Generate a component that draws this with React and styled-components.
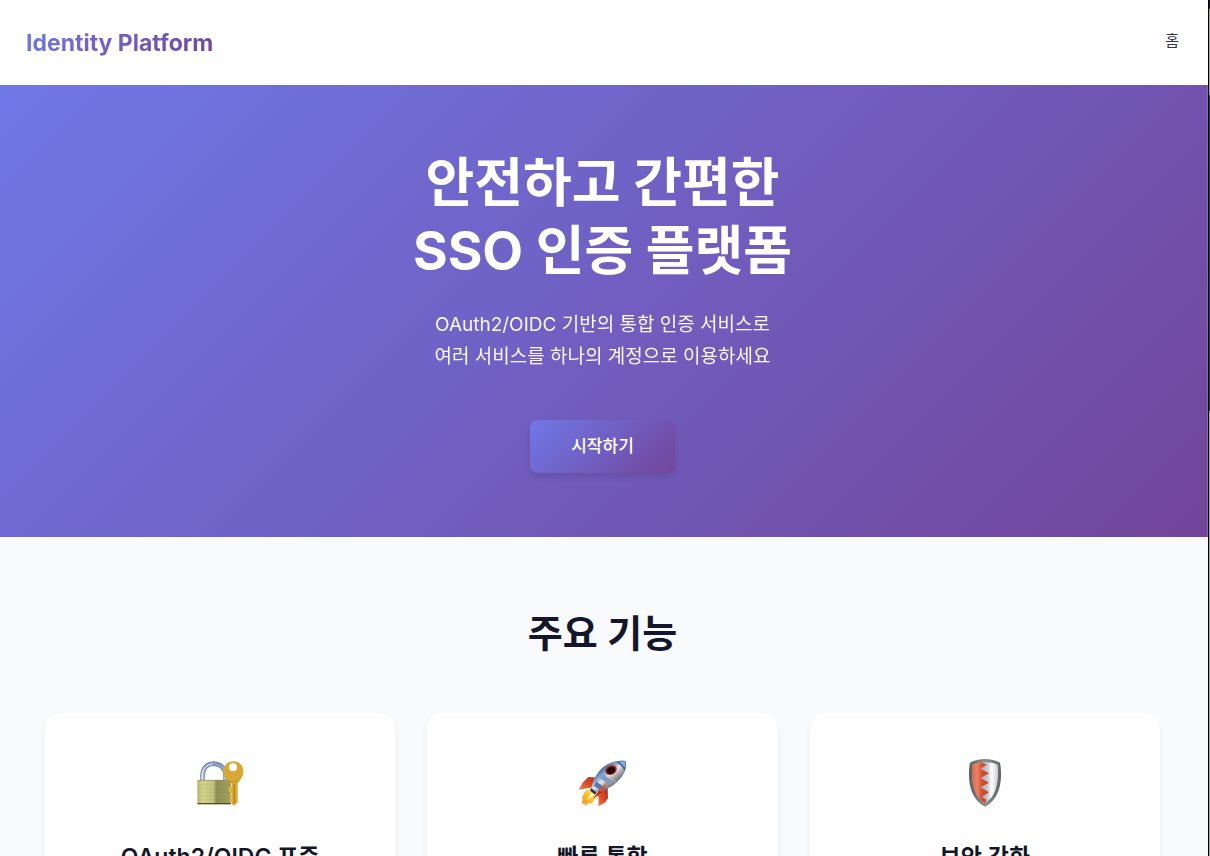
import React from "react";
import styled, { createGlobalStyle } from "styled-components";

const features = [
  { title: "OAuth2/OIDC 표준", icon: LockIcon },
  { title: "빠른 통합", icon: RocketIcon },
  { title: "보안 강화", icon: ShieldIcon },
];

function LockIcon() {
  return (
    <svg viewBox="48 42 144 144" width="48" height="48" aria-hidden="true">
      <defs>
        <linearGradient id="brass">
          <stop offset="0" stopColor="#b9b96c" />
          <stop offset="0.15" stopColor="#d3d38a" />
          <stop offset="0.48" stopColor="#c2c27c" />
          <stop offset="0.56" stopColor="#8f8f55" />
          <stop offset="1" stopColor="#a3a060" />
        </linearGradient>
        <linearGradient id="steel" x1="0" y1="0" x2="0" y2="1">
          <stop offset="0" stopColor="#8298c4" />
          <stop offset="1" stopColor="#b9c3d6" />
        </linearGradient>
      </defs>
      <path
        d="M68 108V92C68 70 81 56 101 56s36 14 36 36v16"
        fill="none"
        stroke="#6c7484"
        strokeWidth="14"
      />
      <path
        d="M68 108V92C68 70 81 56 101 56s36 14 36 36v16"
        fill="none"
        stroke="url(#steel)"
        strokeWidth="11"
      />
      <path
        d="M67 104V92c0-21 13-34 31-35"
        fill="none"
        stroke="#edf3ff"
        strokeWidth="3"
      />
      <rect x="52" y="105" width="101" height="73" rx="2" fill="url(#brass)" />
      <path
        d="M53 120h99M53 131h99M53 142h99M53 153h99M53 164h99"
        stroke="#747530"
        strokeOpacity="0.18"
        strokeWidth="2"
      />
      <path d="M53 106h99" stroke="#858657" strokeWidth="2" />
      <path d="M53 176h99" stroke="#544d20" strokeWidth="4" />
      <path
        d="M160 49c17 0 30 12 30 29 0 17-8 25-17 37v57l-12 11-6-8V114c-15-8-25-19-25-36 0-17 13-29 30-29zm-1 6a12 12 0 1 0 0 24 12 12 0 0 0 0-24z"
        fill="#d8a832"
        fillRule="evenodd"
      />
      <path
        d="M156 125h-8l-3 5v9l7 5h4zM156 149h-6l-4 4 5 5h5zM156 162h-6l-3 5 5 5h4z"
        fill="#dcb43c"
      />
      <path d="M163 117v59" stroke="#ae7a16" strokeWidth="3" />
      <path d="M138 105c12 7 28 7 39 0" fill="none" stroke="#b98420" strokeWidth="2" />
    </svg>
  );
}

function RocketIcon() {
  return (
    <svg viewBox="49 42 144 144" width="48" height="48" aria-hidden="true">
      <defs>
        <linearGradient id="hull" x1="0.2" y1="0.2" x2="0.75" y2="0.8">
          <stop offset="0.1" stopColor="#49668e" />
          <stop offset="0.3" stopColor="#7f9fce" />
          <stop offset="0.5" stopColor="#e6e6e4" />
          <stop offset="0.68" stopColor="#a4a6a9" />
          <stop offset="1" stopColor="#4d5055" />
        </linearGradient>
        <linearGradient id="fin" x1="1" y1="0" x2="0" y2="1">
          <stop offset="0" stopColor="#a72d16" />
          <stop offset="0.55" stopColor="#dc4a28" />
          <stop offset="1" stopColor="#ee8050" />
        </linearGradient>
        <linearGradient id="flame" x1="1" y1="0" x2="0" y2="1">
          <stop offset="0" stopColor="#fff3a0" />
          <stop offset="0.5" stopColor="#fac02f" />
          <stop offset="1" stopColor="#f18a20" />
        </linearGradient>
      </defs>
      <path
        d="M90 134c-12-4-21 3-25 15l-6 14 5-3-4 18 8-4 1 8 13-8 8 2 10-15 6-17z"
        fill="url(#flame)"
      />
      <path d="M89 143l-14 23 18-12 8-8z" fill="#fff5b4" />
      <path d="M113 98l-33-2-16 16-13 22 42-7z" fill="url(#fin)" />
      <path d="M138 127l1 33-8 12-21 12 1-24-3-9z" fill="url(#fin)" />
      <path d="M88 128l17 13-5 8-14-12z" fill="#263347" />
      <path
        d="M192 48c3 18-2 40-20 57-19 20-43 32-68 37l-15-13c5-26 17-47 36-63 19-15 43-21 67-18z"
        fill="url(#hull)"
      />
      <path d="M192 48c2 12 0 23-3 32-5-13-14-23-27-29 9-4 20-5 30-3z" fill="#496a9e" />
      <path d="M191 49c0 7-1 13-2 19-5-8-10-13-17-18z" fill="#8fb0dc" />
      <path d="M126 88l31 24-9 9-35-22z" fill="#839bc2" />
      <path d="M103 109l31 22-14 6-23-14z" fill="#5779b0" />
      <path d="M135 113l-14 29-27 20 20-29z" fill="#b82e18" />
      <path d="M133 115l-19 24" stroke="#ed7147" strokeWidth="4" />
      <path d="M141 95l22 16" stroke="#d3bb83" strokeWidth="3" />
      <ellipse cx="148" cy="75" rx="18" ry="14" transform="rotate(-24 148 75)" fill="#b62619" />
      <ellipse cx="148" cy="76" rx="13" ry="10" transform="rotate(-24 148 76)" fill="#170d12" />
    </svg>
  );
}

function ShieldIcon() {
  return (
    <svg viewBox="48 42 144 144" width="48" height="48" aria-hidden="true">
      <defs>
        <linearGradient id="rim">
          <stop offset="0" stopColor="#595d5e" />
          <stop offset="0.5" stopColor="#8c9192" />
          <stop offset="1" stopColor="#606465" />
        </linearGradient>
        <linearGradient id="silver">
          <stop offset="0.35" stopColor="#aeb2b8" />
          <stop offset="0.6" stopColor="#c8cbd0" />
          <stop offset="0.75" stopColor="#ffffff" />
          <stop offset="1" stopColor="#c9cdd1" />
        </linearGradient>
        <linearGradient id="red">
          <stop offset="0" stopColor="#d8664a" />
          <stop offset="0.3" stopColor="#ee8265" />
          <stop offset="0.6" stopColor="#cf5030" />
          <stop offset="1" stopColor="#c94522" />
        </linearGradient>
      </defs>
      <path
        d="M120 42c17 0 31 4 45 11 4 21 5 49-2 76-7 26-22 45-43 56-21-11-36-30-43-56-7-27-6-55-2-76 14-7 28-11 45-11z"
        fill="url(#rim)"
      />
      <path
        d="M120 51c13 0 26 3 38 8 2 22 2 44-4 67-6 22-17 38-34 48-17-10-28-26-34-48-6-23-6-45-4-67 12-5 25-8 38-8z"
        fill="url(#silver)"
      />
      <path
        d="M110 52l-28 7c-2 22-2 44 4 67 6 22 17 38 34 48l5-10-14-8 21-14-25-15 25-14-25-14 25-14-25-14 18-12z"
        fill="url(#red)"
      />
    </svg>
  );
}

function App() {
  return (
    <>
      <GlobalStyle />
      <Window>
        <Page>
          <Header>
            <Logo href="#">Identity Platform</Logo>
            <Nav>
              <NavLink href="#">홈</NavLink>
            </Nav>
          </Header>

          <Hero>
            <h1>
              안전하고 간편한
              <br />
              SSO 인증 플랫폼
            </h1>
            <p>
              OAuth2/OIDC 기반의 통합 인증 서비스로
              <br />
              여러 서비스를 하나의 계정으로 이용하세요
            </p>
            <StartButton type="button">시작하기</StartButton>
          </Hero>

          <Features>
            <h2>주요 기능</h2>
            <CardGrid>
              {features.map(({ title, icon: Icon }) => (
                <Card key={title}>
                  <IconBox>
                    <Icon />
                  </IconBox>
                  <h3>{title}</h3>
                </Card>
              ))}
            </CardGrid>
          </Features>
        </Page>
        <WindowEdge />
      </Window>
    </>
  );
}

export default App;

const GlobalStyle = createGlobalStyle`
  * {
    box-sizing: border-box;
    margin: 0;
    padding: 0;
  }

  body {
    font-family: Inter, "Noto Sans CJK KR", sans-serif;
    color: #14172a;
    background: #f9fafc;
  }
`;

const Window = styled.div`
  display: flex;
  height: 100vh;
  overflow: hidden;
`;

const Page = styled.main`
  flex: 1;
  min-width: 0;
`;

const WindowEdge = styled.div`
  width: 2px;
  border-left: 1px solid #000;
  background: linear-gradient(
    #1c1a22 9px,
    #a5a3a3 9px 95px,
    #183a45 95px 411px,
    #a3a3a1 411px
  );
`;

const Header = styled.header`
  display: flex;
  align-items: center;
  justify-content: space-between;
  height: 85px;
  padding: 0 29px 0 26px;
  background: #fff;
`;

const Logo = styled.a`
  font-size: 23px;
  font-weight: 700;
  line-height: 32px;
  text-decoration: none;
  color: transparent;
  background: linear-gradient(135deg, #6f78e7 0%, #72459a 100%);
  background-clip: text;
`;

const Nav = styled.nav`
  padding-bottom: 4px;
`;

const NavLink = styled.a`
  font-size: 15px;
  line-height: 24px;
  text-decoration: none;
  color: #303348;
`;

const Hero = styled.section`
  display: flex;
  flex-direction: column;
  align-items: center;
  padding: 64px 26px 64px 24px;
  border-right: 1px solid #8b68b5;
  text-align: center;
  color: #fff;
  background: linear-gradient(135deg, #6f78e7 0%, #72459a 100%);

  h1 {
    font-size: 53px;
    font-weight: 700;
    line-height: 68px;
    margin-bottom: 24px;
  }

  p {
    font-size: 19px;
    font-weight: 400;
    line-height: 32px;
    margin-bottom: 47px;
    opacity: 0.95;
  }
`;

const StartButton = styled.button`
  padding: 0 41px 4px;
  height: 53px;
  border: none;
  border-radius: 8px;
  font-family: inherit;
  font-size: 17px;
  font-weight: 500;
  color: #fff;
  background: linear-gradient(135deg, #6f78e7 0%, #72459a 100%);
  box-shadow: 0 4px 6px rgba(0, 0, 0, 0.1);
  cursor: pointer;
`;

const Features = styled.section`
  padding: 64px 48px 64px 45px;

  h2 {
    font-size: 38px;
    font-weight: 600;
    line-height: 64px;
    margin-bottom: 48px;
    text-align: center;
  }
`;

const CardGrid = styled.div`
  display: grid;
  grid-template-columns: repeat(3, 1fr);
  gap: 32px;
`;

const Card = styled.article`
  padding: 40px 32px;
  border-radius: 16px;
  text-align: center;
  background: #fff;
  box-shadow: 0 4px 6px rgba(0, 0, 0, 0.06);

  h3 {
    font-size: 23px;
    font-weight: 600;
    line-height: 32px;
  }
`;

const IconBox = styled.div`
  display: flex;
  align-items: center;
  justify-content: center;
  height: 60px;
  margin-bottom: 28px;
`;
